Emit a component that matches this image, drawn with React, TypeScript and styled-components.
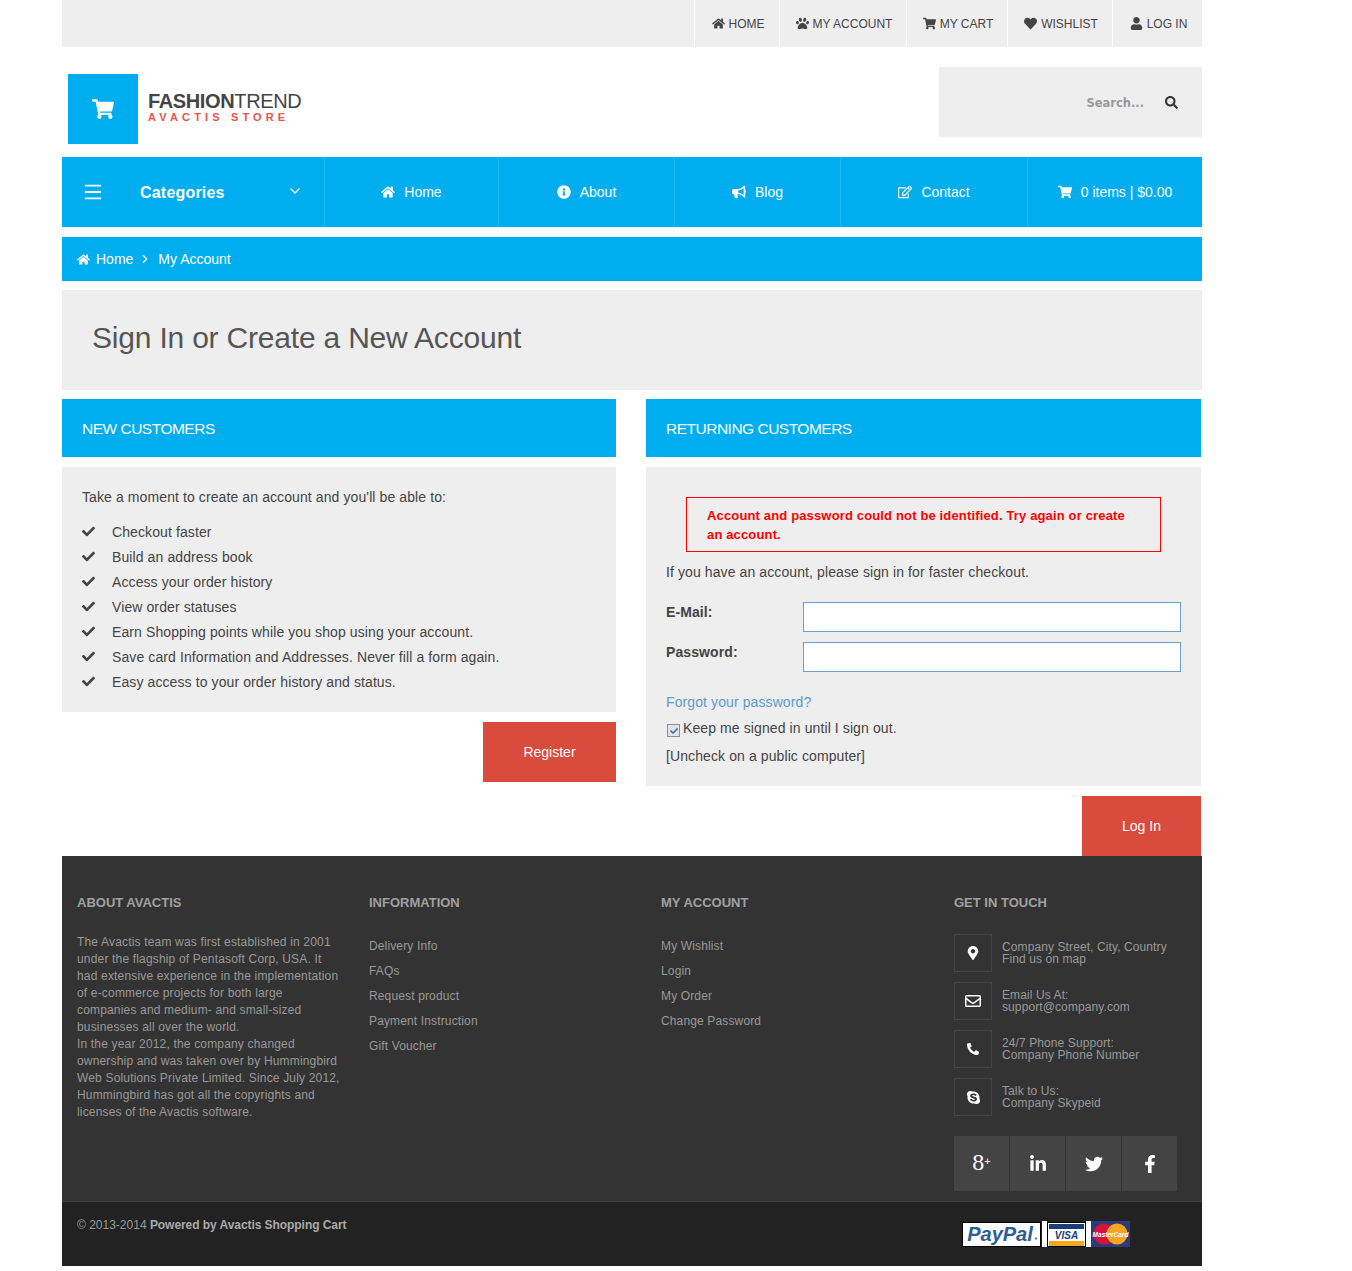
import styled, { createGlobalStyle } from "styled-components";
import { ChevronDown, ChevronRight, Menu } from "lucide-react";
import {
  FaBullhorn,
  FaCheck,
  FaFacebookF,
  FaHeart,
  FaHome,
  FaInfoCircle,
  FaLinkedinIn,
  FaMapMarkerAlt,
  FaPaw,
  FaPhoneAlt,
  FaRegEdit,
  FaRegEnvelope,
  FaSearch,
  FaShoppingCart,
  FaSkype,
  FaTwitter,
  FaUser,
} from "react-icons/fa";

const GlobalStyle = createGlobalStyle`
  body {
    margin: 0;
    background: #fff;
    font-family: "Liberation Sans", Arial, sans-serif;
    color: #444;
  }
  * { box-sizing: border-box; }
`;

const Page = styled.div`
  width: 1140px;
  margin-left: 62px;
  padding-bottom: 5px;
`;

const TopBar = styled.div`
  display: flex;
  justify-content: flex-end;
  height: 47px;
  background: #eee;
`;

const TopLink = styled.a<{ $w: number }>`
  display: flex;
  align-items: center;
  justify-content: center;
  gap: 4px;
  width: ${({ $w }) => $w}px;
  padding-left: 2px;
  border-left: 1px solid #fff;
  font-size: 12px;
  color: #444;
  svg { font-size: 13px; }
`;

const Header = styled.div`
  display: flex;
  justify-content: space-between;
  height: 110px;
  padding-top: 20px;
`;

const Logo = styled.div`
  display: flex;
  gap: 10px;
  margin: 7px 0 0 6px;
`;

const LogoBox = styled.div`
  display: flex;
  align-items: center;
  justify-content: center;
  width: 70px;
  height: 70px;
  background: #00aeef;
  color: #fff;
  font-size: 22px;
`;

const LogoText = styled.div`
  padding-top: 16px;
`;

const LogoName = styled.div`
  font-size: 20px;
  line-height: 22px;
  color: #444;
  letter-spacing: -0.37px;
  b { font-weight: 700; }
`;

const LogoSub = styled.div`
  font-size: 11px;
  line-height: 11px;
  font-weight: 700;
  letter-spacing: 4.15px;
  color: #e8534a;
`;

const SearchBox = styled.div`
  display: flex;
  align-items: center;
  justify-content: flex-end;
  gap: 21px;
  width: 263px;
  height: 70px;
  padding-right: 24px;
  background: #eee;
  color: #333;
  font-size: 13px;
`;

const SearchHint = styled.span`
  margin-top: 1px;
  font-family: "DejaVu Sans", Verdana, sans-serif;
  font-weight: 700;
  font-size: 11.5px;
  color: #999;
`;

const Nav = styled.nav`
  display: grid;
  grid-template-columns: 263px 174px 176px 166px 187px 174px;
  height: 70px;
  background: #00aeef;
  color: #fff;
`;

const CategoryCell = styled.div`
  display: flex;
  align-items: center;
  padding: 0 23px 0 20px;
  border-right: 1px solid #1ab8f3;
  font-size: 16px;
  font-weight: 700;
  letter-spacing: 0.2px;
`;

const Burger = styled.span`
  display: flex;
  width: 58px;
`;

const CategoryLabel = styled.span`
  flex: 1;
  padding-top: 1px;
`;

const Chevron = styled.span`
  display: flex;
  margin: -3px -2px 0 0;
`;

const NavCell = styled.a`
  display: flex;
  align-items: center;
  justify-content: center;
  gap: 9px;
  border-right: 1px solid #1ab8f3;
  font-size: 14px;
  &:last-child { border-right: 0; }
  svg { font-size: 14px; }
`;

const Crumbs = styled.div`
  display: flex;
  align-items: center;
  height: 44px;
  margin-top: 10px;
  padding-left: 15px;
  background: #00aeef;
  color: #fff;
  font-size: 14px;
`;

const CrumbHome = styled.a`
  display: flex;
  align-items: center;
  gap: 6px;
  svg { font-size: 13px; }
`;

const CrumbSep = styled.span`
  display: flex;
  margin: 0 6px 0 5px;
`;

const TitleBar = styled.div`
  display: flex;
  align-items: center;
  height: 100px;
  margin-top: 9px;
  padding: 0 30px 4px;
  background: #eee;
`;

const Title = styled.h1`
  margin: 0;
  font-size: 30px;
  font-weight: 400;
  letter-spacing: -0.2px;
  color: #555;
`;

const Columns = styled.div`
  display: grid;
  grid-template-columns: 554px 555px;
  column-gap: 30px;
  margin-top: 9px;
`;

const Column = styled.section`
  display: flex;
  flex-direction: column;
`;

const ColumnHead = styled.h2`
  display: flex;
  align-items: center;
  height: 58px;
  margin: 0 0 10px;
  padding: 1px 0 0 20px;
  background: #00aeef;
  color: #fff;
  font-size: 15.5px;
  font-weight: 400;
  letter-spacing: -0.5px;
`;

const Panel = styled.div`
  padding: 20px;
  background: #eee;
  font-size: 14px;
  letter-spacing: 0.1px;
  color: #444;
`;

const Intro = styled.div`
  line-height: 20px;
  margin-bottom: 12px;
`;

const Perks = styled.ul`
  display: flex;
  flex-direction: column;
  list-style: none;
  margin: 0 0 -2px;
  padding: 0;
`;

const Perk = styled.li`
  display: flex;
  align-items: center;
  height: 25px;
  svg { width: 13px; font-size: 13px; margin-right: 17px; color: #444; }
`;

const ActionRow = styled.div`
  display: flex;
  justify-content: flex-end;
  margin-top: 10px;
`;

const ActionButton = styled.button<{ $w: number }>`
  width: ${({ $w }) => $w}px;
  height: 60px;
  border: 0;
  background: #d84b3d;
  color: #fff;
  font-family: inherit;
  font-size: 14px;
`;

const ErrorBox = styled.div`
  width: 475px;
  height: 55px;
  margin: 10px 0 0 20px;
  padding: 8px 20px 0;
  border: 1px solid #f00;
  color: #f00;
  font-size: 13px;
  font-weight: 700;
  line-height: 19px;
  letter-spacing: 0.15px;
`;

const SignInHint = styled.div`
  margin: 10px 0 20px;
  line-height: 20px;
`;

const FormRow = styled.div`
  display: grid;
  grid-template-columns: 137px 378px;
  & + & { margin-top: 10px; }
`;

const FieldLabel = styled.label`
  padding-top: 1px;
  font-weight: 700;
  line-height: 18px;
`;

const Field = styled.input`
  height: 30px;
  border: 1px solid #6f9bcd;
  background: #fff;
`;

const ForgotLink = styled.a`
  display: block;
  margin-top: 20px;
  line-height: 20px;
  color: #5b9bd1;
`;

const KeepRow = styled.div`
  display: flex;
  gap: 3px;
  margin-top: 6px;
  line-height: 20px;
`;

const CheckBox = styled.span`
  display: flex;
  align-items: center;
  justify-content: center;
  width: 13px;
  height: 13px;
  margin: 6px 0 0 1px;
  border: 1px solid #8e8e8e;
  background: #dfe3ea;
  color: #4a5f9c;
  font-size: 8px;
`;

const UncheckNote = styled.div`
  margin-top: 8px;
  line-height: 20px;
`;

const Footer = styled.footer`
  background: #333;
  color: #999;
`;

const FooterMain = styled.div`
  display: grid;
  grid-template-columns: 292px 292px 293px 263px;
  height: 345px;
  padding-left: 15px;
`;

const FooterCol = styled.div`
  padding-top: 39px;
`;

const FooterHead = styled.h3`
  margin: 0 0 23px;
  font-size: 13px;
  line-height: 16px;
  font-weight: 700;
  color: #a0a0a0;
`;

const AboutText = styled.p`
  width: 265px;
  margin: 1px 0 0;
  font-size: 12px;
  line-height: 17px;
  letter-spacing: 0.17px;
  color: #999;
`;

const FooterLinks = styled.ul`
  list-style: none;
  margin: 1px 0 0;
  padding: 0;
`;

const FooterLink = styled.li`
  height: 25px;
  font-size: 12px;
  line-height: 25px;
  letter-spacing: 0.14px;
  color: #999;
`;

const ContactRows = styled.div`
  display: flex;
  flex-direction: column;
  gap: 10px;
`;

const ContactRow = styled.div`
  display: flex;
  align-items: center;
  gap: 10px;
`;

const ContactIcon = styled.span<{ $size: number }>`
  display: flex;
  align-items: center;
  justify-content: center;
  width: 38px;
  height: 38px;
  border: 1px solid #444;
  color: #fff;
  font-size: ${({ $size }) => $size}px;
`;

const ContactText = styled.div`
  font-size: 12px;
  line-height: 12px;
  letter-spacing: 0.1px;
  color: #999;
`;

const Socials = styled.div`
  display: flex;
  gap: 1px;
  margin-top: 20px;
`;

const SocialBox = styled.a`
  display: flex;
  align-items: center;
  justify-content: center;
  width: 55px;
  height: 55px;
  background: #444;
  color: #fff;
  font-size: 18px;
`;

// the old g+ mark, closest as a serif numeral with a small plus
const GooglePlusMark = styled.span`
  font-family: "Liberation Serif", serif;
  font-size: 24px;
  line-height: 24px;
  margin-top: -3px;
  sup {
    font-family: "Liberation Sans", sans-serif;
    font-size: 11px;
    line-height: 0;
    vertical-align: 5px;
  }
`;

const FooterBottom = styled.div`
  display: flex;
  justify-content: space-between;
  height: 65px;
  padding: 15px 72px 0 15px;
  border-top: 1px solid #444;
  background: #222;
  font-size: 12px;
  line-height: 16px;
  color: #999;
  b { color: #aaa; letter-spacing: -0.06px; }
`;

const Cards = styled.svg`
  display: block;
  margin-top: 4px;
`;

function PaymentCards() {
  return (
    <Cards width="168" height="27" viewBox="0 0 168 27">
      <rect x="0.5" y="1.5" width="78" height="24" fill="#fff" stroke="#000" />
      <text
        x="38"
        y="20"
        textAnchor="middle"
        fontFamily="Liberation Sans, sans-serif"
        fontSize="20"
        fontStyle="italic"
        fontWeight="700"
        fill="#2b5c92"
      >
        PayPal
      </text>
      <circle cx="74" cy="17.5" r="1.3" fill="#7c8da3" />
      <rect x="80" y="0" width="5" height="26" fill="#fff" />
      <rect x="85.5" y="1.5" width="38" height="24" fill="#fff" stroke="#000" />
      <rect x="87" y="3" width="35" height="5" fill="#1a3e78" />
      <rect x="87" y="20" width="35" height="5" fill="#f2a81e" />
      <text
        x="104.5"
        y="18"
        textAnchor="middle"
        fontFamily="Liberation Sans, sans-serif"
        fontSize="10"
        fontStyle="italic"
        fontWeight="700"
        fill="#1a3e78"
      >
        VISA
      </text>
      <rect x="124" y="0" width="5" height="26" fill="#fff" />
      <rect x="129" y="0" width="39" height="26" fill="#2f3a7a" />
      <circle cx="142" cy="13" r="10.5" fill="#d6123a" />
      <circle cx="155" cy="13" r="10.5" fill="#f4a623" />
      <text
        x="148.5"
        y="15.5"
        textAnchor="middle"
        fontFamily="Liberation Sans, sans-serif"
        fontSize="6.5"
        fontStyle="italic"
        fontWeight="700"
        fill="#fff"
      >
        MasterCard
      </text>
    </Cards>
  );
}

const perks = [
  "Checkout faster",
  "Build an address book",
  "Access your order history",
  "View order statuses",
  "Earn Shopping points while you shop using your account.",
  "Save card Information and Addresses. Never fill a form again.",
  "Easy access to your order history and status.",
];

const infoLinks = ["Delivery Info", "FAQs", "Request product", "Payment Instruction", "Gift Voucher"];
const accountLinks = ["My Wishlist", "Login", "My Order", "Change Password"];

const contacts = [
  { icon: <FaMapMarkerAlt />, size: 14, lines: ["Company Street, City, Country", "Find us on map"] },
  { icon: <FaRegEnvelope />, size: 16, lines: ["Email Us At:", "support@company.com"] },
  { icon: <FaPhoneAlt />, size: 12, lines: ["24/7 Phone Support:", "Company Phone Number"] },
  { icon: <FaSkype />, size: 15, lines: ["Talk to Us:", "Company Skypeid"] },
];

export default function App() {
  return (
    <Page>
      <GlobalStyle />
      <TopBar>
        <TopLink $w={85}><FaHome />HOME</TopLink>
        <TopLink $w={127}><FaPaw />MY ACCOUNT</TopLink>
        <TopLink $w={101}><FaShoppingCart />MY CART</TopLink>
        <TopLink $w={105}><FaHeart />WISHLIST</TopLink>
        <TopLink $w={90}><FaUser />LOG IN</TopLink>
      </TopBar>

      <Header>
        <Logo>
          <LogoBox><FaShoppingCart /></LogoBox>
          <LogoText>
            <LogoName><b>FASHION</b>TREND</LogoName>
            <LogoSub>AVACTIS STORE</LogoSub>
          </LogoText>
        </Logo>
        <SearchBox>
          <SearchHint>Search...</SearchHint>
          <FaSearch />
        </SearchBox>
      </Header>

      <Nav>
        <CategoryCell>
          <Burger><Menu size={22} strokeWidth={2} /></Burger>
          <CategoryLabel>Categories</CategoryLabel>
          <Chevron><ChevronDown size={16} strokeWidth={2} /></Chevron>
        </CategoryCell>
        <NavCell><FaHome />Home</NavCell>
        <NavCell><FaInfoCircle />About</NavCell>
        <NavCell><FaBullhorn />Blog</NavCell>
        <NavCell><FaRegEdit />Contact</NavCell>
        <NavCell><FaShoppingCart />0 items | $0.00</NavCell>
      </Nav>

      <Crumbs>
        <CrumbHome><FaHome />Home</CrumbHome>
        <CrumbSep><ChevronRight size={14} strokeWidth={2} /></CrumbSep>
        <a>My Account</a>
      </Crumbs>

      <TitleBar>
        <Title>Sign In or Create a New Account</Title>
      </TitleBar>

      <Columns>
        <Column>
          <ColumnHead>NEW CUSTOMERS</ColumnHead>
          <Panel>
            <Intro>Take a moment to create an account and you'll be able to:</Intro>
            <Perks>
              {perks.map((perk) => (
                <Perk key={perk}><FaCheck />{perk}</Perk>
              ))}
            </Perks>
          </Panel>
          <ActionRow>
            <ActionButton $w={133}>Register</ActionButton>
          </ActionRow>
        </Column>

        <Column>
          <ColumnHead>RETURNING CUSTOMERS</ColumnHead>
          <Panel>
            <ErrorBox>Account and password could not be identified. Try again or create an account.</ErrorBox>
            <SignInHint>If you have an account, please sign in for faster checkout.</SignInHint>
            <FormRow>
              <FieldLabel>E-Mail:</FieldLabel>
              <Field type="text" />
            </FormRow>
            <FormRow>
              <FieldLabel>Password:</FieldLabel>
              <Field type="password" />
            </FormRow>
            <ForgotLink>Forgot your password?</ForgotLink>
            <KeepRow>
              <CheckBox><FaCheck /></CheckBox>
              Keep me signed in until I sign out.
            </KeepRow>
            <UncheckNote>[Uncheck on a public computer]</UncheckNote>
          </Panel>
          <ActionRow>
            <ActionButton $w={119}>Log In</ActionButton>
          </ActionRow>
        </Column>
      </Columns>

      <Footer>
        <FooterMain>
          <FooterCol>
            <FooterHead>ABOUT AVACTIS</FooterHead>
            <AboutText>
              The Avactis team was first established in 2001 under the flagship of Pentasoft Corp, USA. It had extensive experience in the implementation of e-commerce projects for both large companies and medium- and small-sized businesses all over the world.
              <br />
              In the year 2012, the company changed ownership and was taken over by Hummingbird Web Solutions Private Limited. Since July 2012, Hummingbird has got all the copyrights and licenses of the Avactis software.
            </AboutText>
          </FooterCol>
          <FooterCol>
            <FooterHead>INFORMATION</FooterHead>
            <FooterLinks>
              {infoLinks.map((link) => <FooterLink key={link}>{link}</FooterLink>)}
            </FooterLinks>
          </FooterCol>
          <FooterCol>
            <FooterHead>MY ACCOUNT</FooterHead>
            <FooterLinks>
              {accountLinks.map((link) => <FooterLink key={link}>{link}</FooterLink>)}
            </FooterLinks>
          </FooterCol>
          <FooterCol>
            <FooterHead>GET IN TOUCH</FooterHead>
            <ContactRows>
              {contacts.map((contact) => (
                <ContactRow key={contact.lines[0]}>
                  <ContactIcon $size={contact.size}>{contact.icon}</ContactIcon>
                  <ContactText>
                    {contact.lines[0]}
                    <br />
                    {contact.lines[1]}
                  </ContactText>
                </ContactRow>
              ))}
            </ContactRows>
            <Socials>
              <SocialBox><GooglePlusMark>8<sup>+</sup></GooglePlusMark></SocialBox>
              <SocialBox><FaLinkedinIn /></SocialBox>
              <SocialBox><FaTwitter /></SocialBox>
              <SocialBox><FaFacebookF /></SocialBox>
            </Socials>
          </FooterCol>
        </FooterMain>
        <FooterBottom>
          <span>© 2013-2014 <b>Powered by Avactis Shopping Cart</b></span>
          <PaymentCards />
        </FooterBottom>
      </Footer>
    </Page>
  );
}
